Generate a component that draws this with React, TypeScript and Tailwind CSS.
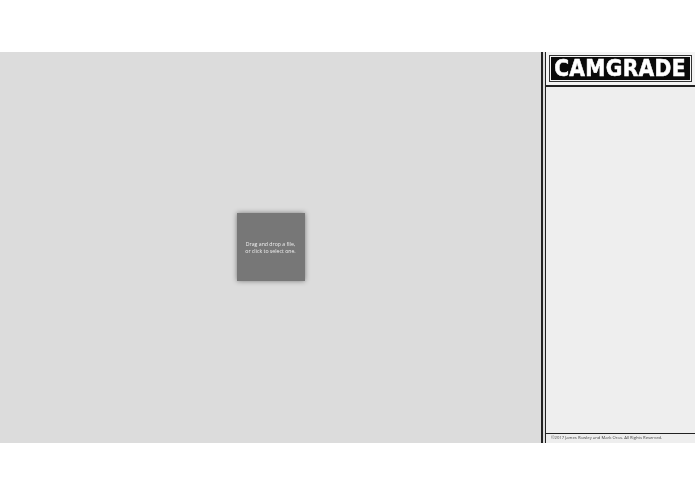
export default function App() {
  return (
    <div className="flex h-[494px] w-[695px] flex-col overflow-hidden bg-white font-['Open_Sans',sans-serif]">
      <div className="mt-[52px] flex h-[391px] w-full">
        <main className="flex flex-1 items-center justify-center bg-[#dcdcdc] pb-[1px]">
          <div className="flex h-[68px] w-[68px] items-center justify-center bg-[#777777] pt-[1px] text-center text-[5.2px] leading-[6.5px] text-[#eeeeee] shadow-[0_0_5px_rgba(0,0,0,0.45)]">
            <p className="blur-[0.2px]">
              Drag and drop a file,
              <br />
              or click to select one.
            </p>
          </div>
        </main>

        <aside className="flex w-[154px] flex-col border-l-[2px] border-[#222222] bg-[#eeeeee]">
          <div className="flex h-full flex-col border-l-[2px] border-[#dddddd]">
            <div className="flex h-full flex-col border-l-[1px] border-[#222222]">
              <div className="flex h-[35px] items-center justify-center border-b-[2px] border-[#222222] bg-[#f4f4f4] pr-[1px]">
                <div className="border border-[#333333] p-[1px]">
                  <div className="flex h-[23px] w-[139px] items-center justify-center bg-[#0a0a0a] font-['DejaVu_Sans_Condensed','DejaVu_Sans',sans-serif] text-[22.5px] leading-[23px] font-bold tracking-[0.3px] text-white blur-[0.25px] [-webkit-text-stroke:0.5px_white]">
                    CAMGRADE
                  </div>
                </div>
              </div>
              <div className="flex-1" />
              <footer className="flex h-[10px] items-center border-t-[1px] border-[#222222] pl-[5px] text-[4.2px] text-[#444444]">
                <span className="blur-[0.15px]">©2017 James Rowley and Mark Oros. All Rights Reserved.</span>
              </footer>
            </div>
          </div>
        </aside>
      </div>
    </div>
  );
}
